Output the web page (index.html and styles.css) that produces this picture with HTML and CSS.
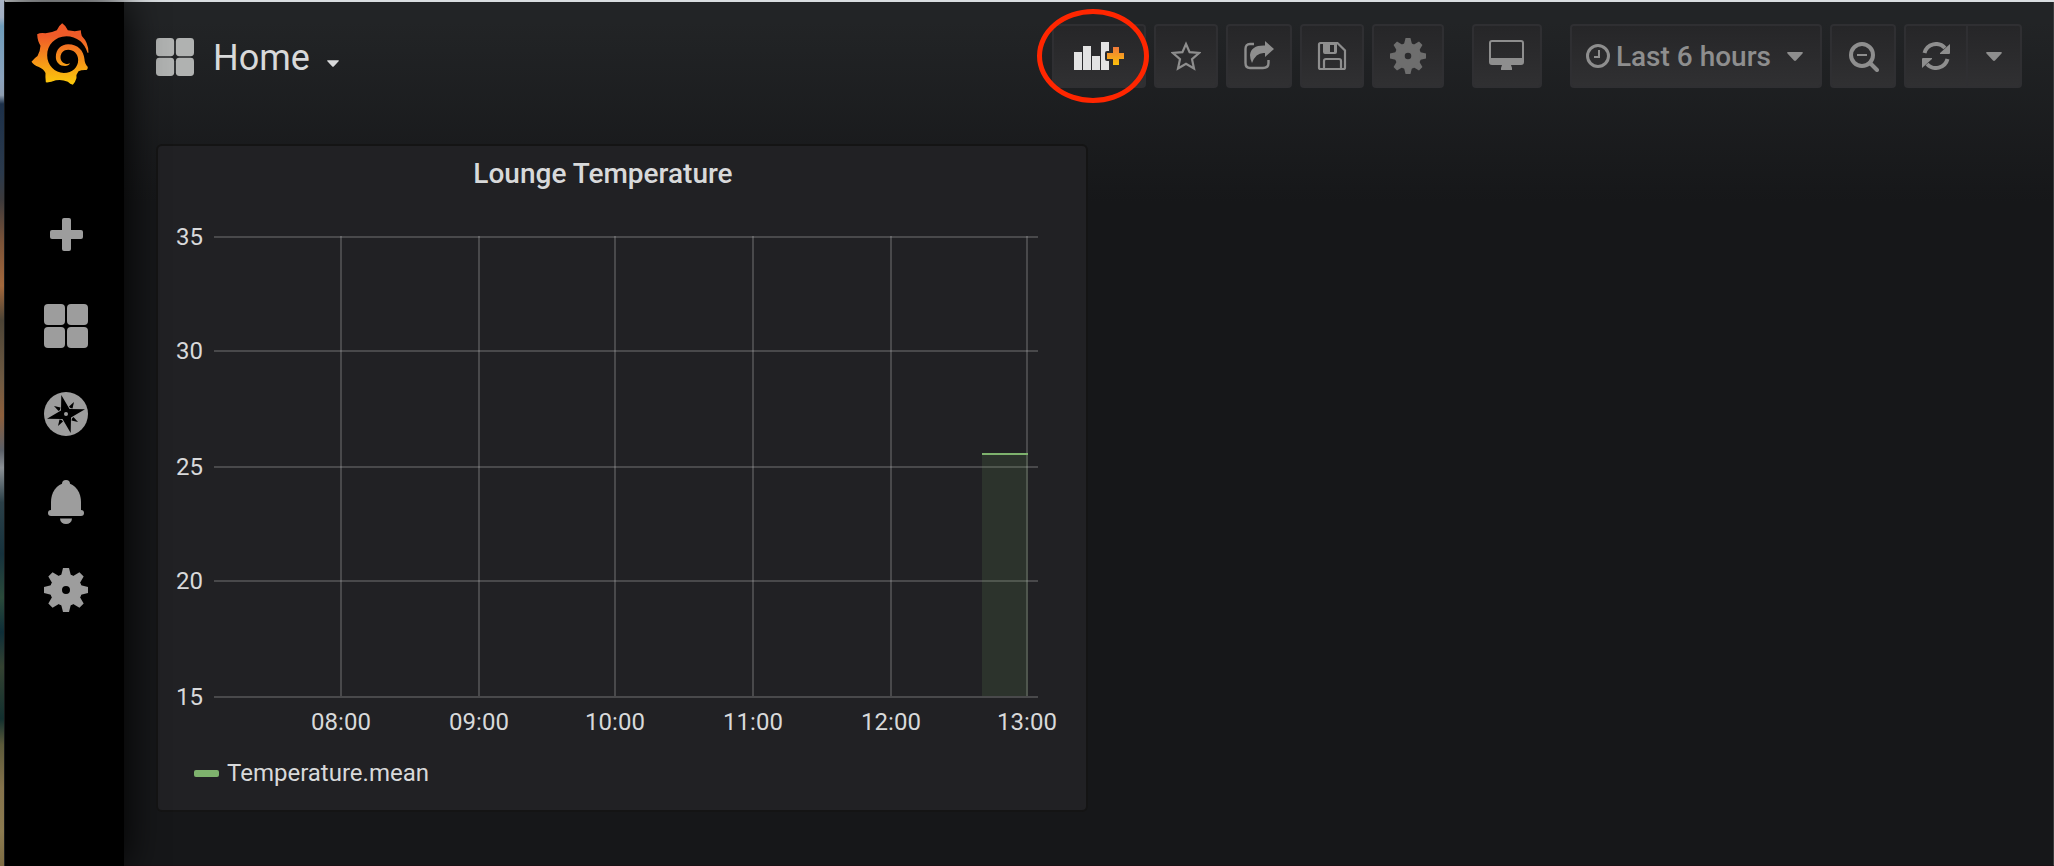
FILE: index.html
```
<!DOCTYPE html>
<html lang="en">
<head>
    <meta charset="UTF-8">
    <meta name="viewport" content="width=device-width, initial-scale=1.0">
    <title>Home - Grafana</title>
    <link rel="stylesheet" href="styles.css">
</head>
<body>

<!-- Shared icon shapes -->
<svg class="icon-defs" aria-hidden="true">
    <symbol id="icon-grid" viewBox="0 0 44 44">
        <rect x="0" y="0" width="21" height="21" rx="4"/>
        <rect x="23" y="0" width="21" height="21" rx="4"/>
        <rect x="0" y="23" width="21" height="21" rx="4"/>
        <rect x="23" y="23" width="21" height="21" rx="4"/>
    </symbol>
    <symbol id="icon-gear" viewBox="0 0 44 44">
        <path fill-rule="evenodd" d="M22 6a16 16 0 1 0 0 32a16 16 0 1 0 0-32zM22 18a4 4 0 1 1 0 8a4 4 0 1 1 0-8z"/>
        <path id="gear-tooth" d="M19 0h6l2 8H17zM19 44h6l2-8H17z"/>
        <use href="#gear-tooth" transform="rotate(45 22 22)"/>
        <use href="#gear-tooth" transform="rotate(90 22 22)"/>
        <use href="#gear-tooth" transform="rotate(135 22 22)"/>
    </symbol>
    <symbol id="icon-caret" viewBox="0 0 16 9">
        <path d="M1 0h14q1.500 .5 .5 1.500L9 8.500q-1 .8-2 0L.5 1.500Q-.5 .5 1 0z"/>
    </symbol>
</svg>

<div class="desktop-edge"></div>

<div class="window">
    <nav class="sidebar">
        <a href="#" class="sidebar-logo" aria-label="Grafana">
            <svg width="58" height="62" viewBox="94 71 173 186">
                <defs>
                    <linearGradient id="flame" x1="0" y1="0" x2="0" y2="1">
                        <stop offset="0.2" stop-color="#f05a28"/>
                        <stop offset="1" stop-color="#fbca0a"/>
                    </linearGradient>
                </defs>
                <path fill="url(#flame)" d="M187 72Q197 78 204 93Q226 98 243 93Q243 102 246 110Q266 130 266 160L263 160Q256 138 241 125Q222 111 200 111C165 111 142 138 142 168C142 198 165 221 192 221C218 221 235 204 235 182C235 163 221 151 205 151C191 151 182 161 182 174C182 186 191 193 200 194Q206 195 210 191C209 198 202 200 196 200C180 200 168 190 168 173C168 150 184 135 205 135C235 135 252 155 254 180Q254 193 264 203Q264 210 260 212Q245 211 236 216Q228 226 230 236Q226 250 219 256Q211 254 204 247Q185 239 168 243Q152 250 138 249Q136 234 137 221Q132 209 117 203Q101 197 95 187Q104 176 113 170Q121 156 122 139Q113 126 112 105Q122 99 137 102Q154 101 171 93Q177 79 187 72z"/>
            </svg>
        </a>
        <a href="#" class="sidebar-item sidebar-create" aria-label="Create">
            <svg width="33" height="33" viewBox="0 0 33 33">
                <rect x="12" y="0" width="9" height="33" rx="2"/>
                <rect x="0" y="12" width="33" height="9" rx="2"/>
            </svg>
        </a>
        <a href="#" class="sidebar-item" aria-label="Dashboards">
            <svg width="44" height="44"><use href="#icon-grid"/></svg>
        </a>
        <a href="#" class="sidebar-item" aria-label="Explore">
            <svg width="44" height="44" viewBox="0 0 44 44">
                <circle cx="22" cy="22" r="22"/>
                <g fill="#000">
                    <path d="M17.300 3L25.500 17L41 17.300L27 25.500L26.700 41L18.500 27L3 26.700L17 18.500z"/>
                    <path id="compass-dart" d="M30 10L25 14.500Q26 16.500 28.500 16.500z"/>
                    <use href="#compass-dart" transform="rotate(90 22 22)"/>
                    <use href="#compass-dart" transform="rotate(180 22 22)"/>
                    <use href="#compass-dart" transform="rotate(270 22 22)"/>
                </g>
                <circle cx="22" cy="22" r="2"/>
            </svg>
        </a>
        <a href="#" class="sidebar-item" aria-label="Alerting">
            <svg width="36" height="44" viewBox="0 0 36 44">
                <circle cx="18" cy="4" r="4"/>
                <path d="M18 2.500C28 4 33 13 33 22V32H3V22C3 13 8 4 18 2.500z"/>
                <rect x="0" y="30" width="36" height="6" rx="3"/>
                <path d="M12 38.500h12a6 5.500 0 0 1-12 0z"/>
            </svg>
        </a>
        <a href="#" class="sidebar-item" aria-label="Configuration">
            <svg width="44" height="44"><use href="#icon-gear"/></svg>
        </a>
    </nav>

    <main class="main">
        <header class="navbar">
            <button type="button" class="page-title">
                <svg class="page-title-icon" width="38" height="38"><use href="#icon-grid"/></svg>
                <span>Home</span>
                <svg class="page-title-caret" width="12" height="7"><use href="#icon-caret"/></svg>
            </button>

            <div class="toolbar">
                <div class="toolbar-group">
                    <div class="add-panel">
                        <button type="button" class="btn" aria-label="Add panel">
                            <svg width="60" height="28" viewBox="-5 0 60 28">
                                <defs>
                                    <linearGradient id="plus-fill" x1="0" y1="0" x2="0" y2="1">
                                        <stop offset="0" stop-color="#f0793a"/>
                                        <stop offset="1" stop-color="#fbc00a"/>
                                    </linearGradient>
                                </defs>
                                <path fill="#e3e3e3" d="M0 10h8v18H0zM9 4h8v24H9zM18 14h8v14h-8zM27 0h8v9h-2q-2 0-2 2v6q0 2 2 2h2v9h-8z"/>
                                <path fill="url(#plus-fill)" d="M39 5h6v6h5v6h-5v6h-6v-6h-6v-6h6z"/>
                            </svg>
                        </button>
                        <span class="add-panel-ring"></span>
                    </div>
                    <button type="button" class="btn" aria-label="Mark as favorite">
                        <svg width="30" height="30" viewBox="0 0 30 30">
                            <path fill="none" stroke="#8e8e8e" stroke-width="2.200" d="M15 3L18.600 11.200L28 12L21 18.200L23 27.500L15 22.700L7 27.500L9 18.200L2 12L11.400 11.200z"/>
                        </svg>
                    </button>
                    <button type="button" class="btn" aria-label="Share dashboard">
                        <svg width="32" height="32" viewBox="-1 -1 32 32">
                            <path fill="none" stroke="#8e8e8e" stroke-width="2.400" d="M10 3H6Q1.500 3 1.500 8V22Q1.500 27 6 27H19Q24.500 27 24.500 22V19"/>
                            <path d="M21 0L30 8L21 16V12Q12 11 8 22Q6 18 6 14Q7 4 21 4.500z"/>
                        </svg>
                    </button>
                    <button type="button" class="btn" aria-label="Save dashboard">
                        <svg width="30" height="30" viewBox="-1 -1 30 30">
                            <path fill="none" stroke="#8e8e8e" stroke-width="2.200" d="M2.500 1H19.500L27 8.500V25.500Q27 27 25.500 27H2.500Q1 27 1 25.500V2.500Q1 1 2.500 1zM6 27V19Q6 17 8 17H21Q23 17 23 19V27"/>
                            <path fill-rule="evenodd" d="M5 1H19V10Q19 12 17 12H7Q5 12 5 10zM12 3V10H16V3z"/>
                        </svg>
                    </button>
                    <button type="button" class="btn btn-settings" aria-label="Dashboard settings">
                        <svg width="38" height="36"><use href="#icon-gear"/></svg>
                    </button>
                </div>

                <div class="toolbar-group">
                    <button type="button" class="btn" aria-label="Cycle view mode">
                        <svg width="36" height="32" viewBox="0 0 36 32">
                            <path fill-rule="evenodd" d="M3 0H32Q35 0 35 3V22Q35 25 32 25H22L23 28V30H12V28L13 25H3Q0 25 0 22V3Q0 0 3 0zM3 2Q2 2 2 3V18H33V3Q33 2 32 2z"/>
                        </svg>
                    </button>
                </div>

                <div class="toolbar-group">
                    <button type="button" class="btn btn-time">
                        <svg width="24" height="24" viewBox="0 0 24 24">
                            <circle cx="12" cy="12" r="10.500" fill="none" stroke="#8e8e8e" stroke-width="3"/>
                            <path fill="none" stroke="#8e8e8e" stroke-width="2" d="M13 6v7H8"/>
                        </svg>
                        <span class="btn-time-label">Last 6 hours</span>
                        <svg width="16" height="9"><use href="#icon-caret"/></svg>
                    </button>
                    <button type="button" class="btn" aria-label="Zoom out">
                        <svg width="32" height="32" viewBox="-2 -2 32 32">
                            <circle cx="13" cy="13" r="11" fill="none" stroke="#8e8e8e" stroke-width="4"/>
                            <path fill="none" stroke="#8e8e8e" stroke-width="4" stroke-linecap="round" d="M21 21l7 7"/>
                            <path d="M8 12h10v2H8z"/>
                        </svg>
                    </button>
                    <div class="btn-pair">
                        <button type="button" class="btn" aria-label="Refresh">
                            <svg width="28" height="28" viewBox="0 0 28 28">
                                <path fill="none" stroke="#8e8e8e" stroke-width="4" d="M2.500 11A12 12 0 0 1 23 6M25.500 17A12 12 0 0 1 5 22"/>
                                <path d="M28 2V11Q28 12 27 12H18L18 11zM0 26V17Q0 16 1 16H10L10 17z"/>
                            </svg>
                        </button>
                        <button type="button" class="btn" aria-label="Refresh interval">
                            <svg width="16" height="9"><use href="#icon-caret"/></svg>
                        </button>
                    </div>
                </div>
            </div>
        </header>

        <div class="dashboard">
            <section class="panel">
                <h2 class="panel-title">Lounge Temperature</h2>
                <svg class="chart" viewBox="2 2 928 546" role="img" aria-label="Lounge Temperature graph">
                    <g class="chart-grid">
                        <path d="M58 37H882M58 151H882M58 267H882M58 381H882M58 497H882"/>
                        <path d="M185 36V496M323 36V496M459 36V496M597 36V496M735 36V496M871 36V496"/>
                    </g>
                    <rect class="chart-area" x="826" y="255" width="46" height="241"/>
                    <path class="chart-line" d="M826 254H872"/>
                    <g class="chart-y">
                        <text x="47" y="45">35</text>
                        <text x="47" y="159">30</text>
                        <text x="47" y="275">25</text>
                        <text x="47" y="389">20</text>
                        <text x="47" y="505">15</text>
                    </g>
                    <g class="chart-x">
                        <text x="185" y="530">08:00</text>
                        <text x="323" y="530">09:00</text>
                        <text x="459" y="530">10:00</text>
                        <text x="597" y="530">11:00</text>
                        <text x="735" y="530">12:00</text>
                        <text x="871" y="530">13:00</text>
                    </g>
                </svg>
                <div class="legend">
                    <span class="legend-dash"></span>
                    <a href="#" class="legend-label">Temperature.mean</a>
                </div>
            </section>
        </div>
    </main>
</div>

</body>
</html>
```

FILE: styles.css
```
* {
    box-sizing: border-box;
}

body {
    font-family: Roboto, Arial, sans-serif;
    margin: 0;
    display: flex;
    min-height: 100vh;
    background-color: #161719;
    color: #d8d9da;
}

a {
    color: inherit;
    text-decoration: none;
}

button {
    font-family: inherit;
    color: inherit;
    cursor: pointer;
}

svg {
    display: block;
    fill: currentColor;
}

.icon-defs {
    position: absolute;
    width: 0;
    height: 0;
}

/* Sliver of wallpaper next to the window */
.desktop-edge {
    position: relative;
    z-index: 2;
    width: 4px;
    background: linear-gradient(#a9b4c6 0%, #a3b0c4 2%, #6f9dbb 3%, #8ba3bd 9%, #8e9db0 11%, #1c3049 12%, #2b3a4c 20%, #3c3a3c 23%, #7b5338 28%, #a3683c 33%, #4c4436 37%, #6f5a42 44%, #8d5f3c 48%, #5b6068 52%, #8b9095 54%, #2b4048 58%, #16323d 64%, #2a4a3a 69%, #0e2e38 73%, #344231 77%, #12302f 83%, #5c5a3a 86%, #85734c 91%, #8c7b50 96%, #7d6c43 100%);
}

.window {
    flex: 1;
    display: flex;
    border-top: 2px solid #d9dde0;
    border-left: 1px solid #2c2e30;
}

.sidebar {
    position: relative;
    z-index: 1;
    width: 119px;
    padding: 21px 0 0 3px;
    display: flex;
    flex-direction: column;
    align-items: center;
    background-color: #000;
    color: #9d9d9d;
    box-shadow: 0 0 40px #000;
}

.sidebar-logo {
    align-self: flex-start;
    margin: 0 0 105px 23px;
}

.sidebar-item {
    display: flex;
    align-items: center;
    justify-content: center;
    width: 88px;
    height: 88px;
}

.sidebar-create {
    margin-bottom: 4px;
}

.main {
    flex: 1;
    border-right: 1px solid #3a3b3c;
    border-bottom: 1px solid #1a1115;
    background: linear-gradient(#222426 20px, #161719 200px);
}

.navbar {
    display: flex;
    justify-content: space-between;
    padding: 22px 31px 0 32px;
}

.page-title {
    display: flex;
    align-items: center;
    padding: 2px 0 0;
    border: none;
    background: none;
    font-size: 36px;
    line-height: 40px;
}

.page-title span {
    padding-top: 2px;
}

.page-title-icon {
    margin-right: 19px;
    color: #b0b2b1;
}

.page-title-caret {
    margin: 12px 0 0 17px;
}

.toolbar {
    display: flex;
    gap: 28px;
}

.toolbar-group {
    display: flex;
    gap: 8px;
}

.btn {
    display: flex;
    align-items: center;
    height: 64px;
    padding: 0 15px;
    border: 2px solid #2f2f32;
    border-radius: 4px;
    background: linear-gradient(#262628, #303032);
    color: #8e8e8e;
}

.btn-settings {
    color: #6e6e6e;
}

.btn-time {
    padding: 0 17px 0 14px;
    font-size: 28px;
    font-weight: 500;
}

.btn-time-label {
    margin: 0 16px 0 6px;
}

.btn-pair {
    display: flex;
}

.btn-pair .btn:first-child {
    padding: 0 16px;
    border-radius: 4px 0 0 4px;
}

.btn-pair .btn:last-child {
    padding: 0 18px;
    border-left: none;
    border-radius: 0 4px 4px 0;
}

.add-panel {
    position: relative;
}

.add-panel-ring {
    position: absolute;
    left: -15px;
    top: -15px;
    width: 112px;
    height: 94px;
    border: 5px solid #ff2600;
    border-radius: 50%;
    pointer-events: none;
}

.dashboard {
    display: grid;
    grid-template-columns: 1fr 1fr;
    gap: 8px;
    padding: 58px 31px 54px 34px;
}

.panel {
    padding-bottom: 12px;
    border-radius: 4px;
    background-color: #212124;
    box-shadow: 0 0 0 2px #141414;
}

.panel-title {
    margin: 0;
    padding-right: 38px;
    font-size: 28px;
    font-weight: 500;
    line-height: 56px;
    text-align: center;
}

.chart {
    width: 100%;
    height: auto;
    font-size: 24px;
}

.chart-grid {
    fill: none;
    stroke: rgba(200, 200, 200, 0.24);
    stroke-width: 2;
}

.chart-area {
    fill: rgba(126, 178, 109, 0.12);
}

.chart-line {
    stroke: #7eb26d;
    stroke-width: 2;
}

.chart-y {
    text-anchor: end;
}

.chart-x {
    text-anchor: middle;
}

.legend {
    display: flex;
    align-items: center;
    gap: 8px;
    padding-left: 36px;
    font-size: 24px;
    line-height: 50px;
}

.legend-dash {
    width: 25px;
    height: 7px;
    border-radius: 2px;
    background-color: #7eb26d;
}
```
